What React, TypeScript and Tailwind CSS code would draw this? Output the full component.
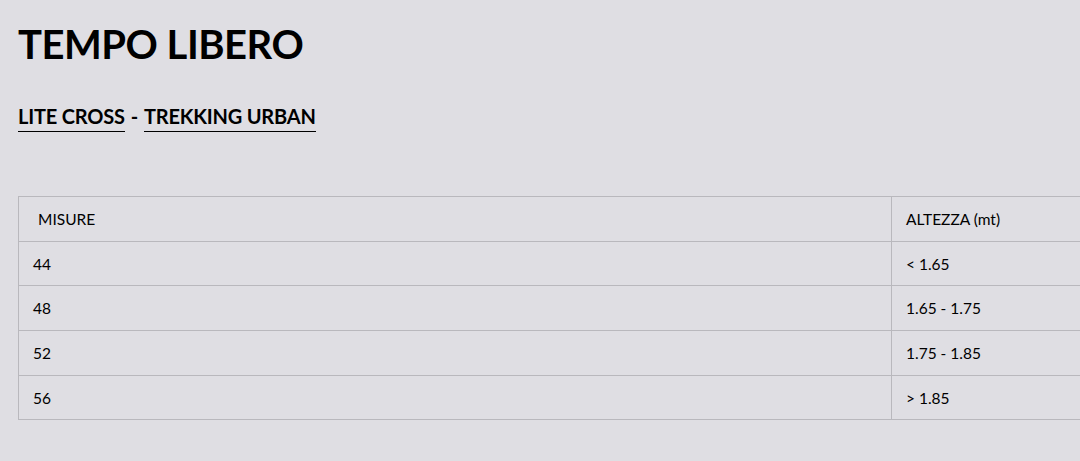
const rows = [
  { size: "44", height: "< 1.65", h: "h-[44px]" },
  { size: "48", height: "1.65 - 1.75", h: "h-[45px]" },
  { size: "52", height: "1.75 - 1.85", h: "h-[45px]" },
  { size: "56", height: "> 1.85", h: "h-[44px]" },
];

export default function App() {
  return (
    <div className="w-[1080px] h-[461px] overflow-hidden bg-[#dfdee3] text-black font-['Lato','Liberation_Sans',sans-serif]">
      <div className="pl-[18px] pt-[22px]">
        <h1 className="text-[40px] leading-[44px] font-bold tracking-[-0.5px]">TEMPO LIBERO</h1>
        <div className="mt-[38px] flex items-center text-[20px] leading-[24px] font-bold tracking-[-0.2px]">
          <a className="border-b-[1.5px] border-black pb-[3px]">LITE CROSS</a>
          <span className="px-[6px] pb-[4px]">-</span>
          <a className="border-b-[1.5px] border-black pb-[3px]">TREKKING URBAN</a>
        </div>
        <table className="mt-[64px] w-[1120px] border-collapse text-[15.5px] leading-[20px]">
          <thead>
            <tr className="h-[45px]">
              <th className="w-[873px] border border-[#b9b8bd] pl-[19px] text-left font-normal">MISURE</th>
              <th className="border border-[#b9b8bd] pl-[14px] text-left font-normal">ALTEZZA (mt)</th>
            </tr>
          </thead>
          <tbody>
            {rows.map((r) => (
              <tr key={r.size} className={r.h}>
                <td className="border border-[#b9b8bd] pl-[14px]">{r.size}</td>
                <td className="border border-[#b9b8bd] pl-[14px]">{r.height}</td>
              </tr>
            ))}
          </tbody>
        </table>
      </div>
    </div>
  );
}
